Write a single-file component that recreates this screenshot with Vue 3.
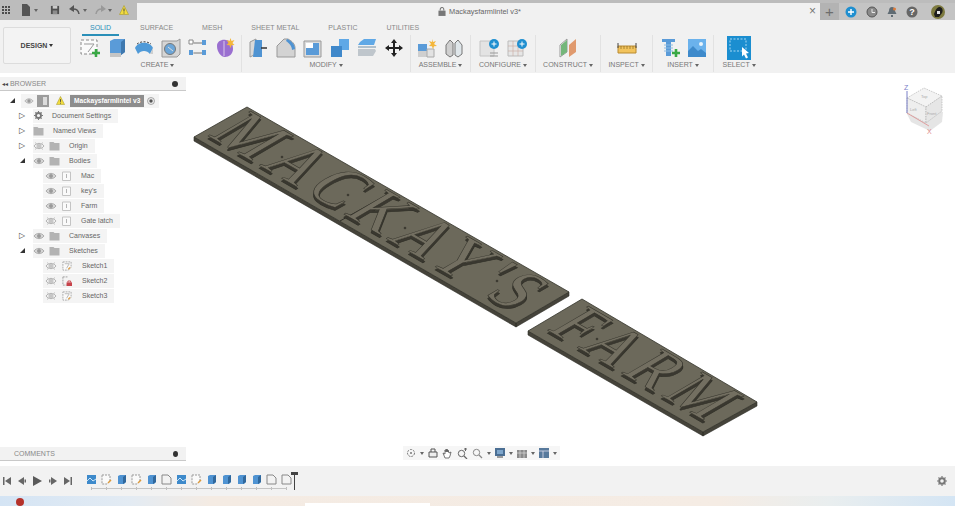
<template>
  <div class="app">
    <svg class="sprite" xmlns="http://www.w3.org/2000/svg">
      <symbol id="eye" viewBox="0 0 12 10"><path d="M1 5c2.500-3.500 7.500-3.500 10 0-2.500 3.500-7.500 3.500-10 0z" fill="#d6d6d6" stroke="#adadad" /><circle cx="6" cy="5" r="2" fill="#9a9a9a" /></symbol>
      <symbol id="eye-off" viewBox="0 0 12 10"><path d="M1 5c2.500-3.500 7.500-3.500 10 0-2.500 3.500-7.500 3.500-10 0z" fill="#f4f4f4" stroke="#b4b4b4" /><circle cx="6" cy="5" r="2" fill="none" stroke="#b4b4b4" /><path d="M2 1.500l8 7M2 8.500l8-7" stroke="#c4c4c4" /></symbol>
      <symbol id="folder" viewBox="0 0 11 10"><path d="M.5 1h4l1 1h5v7.500H.5z" fill="#b3b3b3" /></symbol>
      <symbol id="body" viewBox="0 0 9 10"><path d="M.5 1h8v8.500h-8z" fill="#fafafa" stroke="#c4c4c4" /><path d="M4.500 3v4" stroke="#b4b4b4" /></symbol>
      <symbol id="sketch" viewBox="0 0 11 11"><path d="M1 1h9v6L7 10H1z" fill="#fafafa" stroke="#a4a4a4" stroke-dasharray="2 1" /><path d="M3 3h5L5 8" fill="none" stroke="#b4b4b4" /><path d="M7 9l2-2" stroke="#dd9a3c" stroke-width="1.400" /></symbol>
      <symbol id="sketch-lock" viewBox="0 0 11 11"><path d="M1 1h6M1 1v9h4" fill="none" stroke="#9b9b9b" stroke-dasharray="2 1" /><path d="M5 7h6v4H5z" fill="#c7424a" /><path d="M6.500 7V5.500h3V7" fill="none" stroke="#c7424a" /></symbol>
      <symbol id="cube" viewBox="0 0 20 20"><path d="M3 3l4-2h11v13l-4 3H3z" fill="#5a9bd8" /><path d="M14 17V4l4-3v13z" fill="#3f78ae" /><path d="M3 15h11v4H3z" fill="#c5c5c5" /></symbol>
    </svg>

    <header class="titlebar">
      <div class="quick">
        <svg class="ico grid-ico" width="10" height="10" viewBox="0 0 10 10"><path d="M1 1h2v2H1zM4 1h2v2H4zM7 1h2v2H7zM1 4h2v2H1zM4 4h2v2H4zM7 4h2v2H7zM1 7h2v2H1zM4 7h2v2H4zM7 7h2v2H7z" fill="#4c4c4c" /></svg>
        <svg class="file-ico" width="10" height="12" viewBox="0 0 10 12"><path d="M1 0h5l3 3v9H1z" fill="#555" /></svg>
        <span class="caret q1"></span>
        <svg class="save-ico" width="10" height="10" viewBox="0 0 11 11"><path d="M1 1h9v9H1z" fill="#505050" /><path d="M3 1h5v3H3z" fill="#ccc" /><path d="M3 6h5v4H3z" fill="#8d8d8d" /></svg>
        <svg class="undo-ico" width="11" height="10" viewBox="0 0 11 10"><path d="M10 9C9.500 5 7 3.500 3 4" fill="none" stroke="#555" stroke-width="1.500" /><path d="M5 0L0 4l5 3z" fill="#555" /></svg>
        <span class="caret q2"></span>
        <svg class="redo-ico" width="11" height="10" viewBox="0 0 11 10"><path d="M1 9c.500-4 3-5.500 7-5" fill="none" stroke="#999" stroke-width="1.500" /><path d="M6 0l5 4-5 3z" fill="#999" /></svg>
        <span class="caret q3"></span>
        <svg class="warn-ico" width="10" height="10" viewBox="0 0 10 10"><path d="M5 .5l4.500 9H.5z" fill="#f2dc3d" stroke="#a89a30" stroke-width=".6" /><path d="M5 3.500v3M5 7.500v1" stroke="#444" /></svg>
      </div>
      <div class="doc-tab">
        <svg width="8" height="9" viewBox="0 0 9 10"><path d="M2.500 4V2.500a2 2 0 0 1 4 0V4" fill="none" stroke="#777" stroke-width="1.200" /><path d="M.5 4h8v6h-8z" fill="#777" /></svg>
        <span class="doc-name">Mackaysfarmlintel v3*</span>
        <span class="doc-close">×</span>
      </div>
      <div class="account">
        <span class="new-tab">+</span>
        <svg width="12" height="12" viewBox="0 0 12 12"><circle cx="6" cy="6" r="5.500" fill="#1f8fd0" /><path d="M3 6h6M6 3v6" stroke="#fff" stroke-width="1.400" /></svg>
        <svg width="12" height="12" viewBox="0 0 12 12"><circle cx="6" cy="6" r="5" fill="#8a8a8a" stroke="#555" /><path d="M6 3v3.500h3" fill="none" stroke="#e8e8e8" /></svg>
        <svg width="10" height="12" viewBox="0 0 10 12"><path d="M5 1c2 0 3 1.500 3 4l1.500 3h-9L2 5c0-2.500 1-4 3-4zM4 9h2v2H4z" fill="#5f6b73" /><circle cx="7.500" cy="3" r="1.500" fill="#e07b39" /></svg>
        <svg width="12" height="12" viewBox="0 0 12 12"><circle cx="6" cy="6" r="5.500" fill="#666" /><text x="6" y="9" class="help-mark">?</text></svg>
        <svg class="avatar" width="14" height="14" viewBox="0 0 14 14"><circle cx="7" cy="7" r="7" fill="#7d7a3f" /><path d="M3 9c2-5 3-7 6-7 3 1 3 4 2 6l-3 4H4z" fill="#1e1e1e" /><path d="M6 6h3v3H6z" fill="#e6e6e6" /></svg>
      </div>
    </header>

    <section class="toolbar">
      <div class="design-btn">DESIGN <span class="caret dark"></span></div>
      <div class="tools">
        <nav class="tabs">
          <span class="tab active">SOLID</span>
          <span class="tab">SURFACE</span>
          <span class="tab">MESH</span>
          <span class="tab">SHEET METAL</span>
          <span class="tab">PLASTIC</span>
          <span class="tab">UTILITIES</span>
        </nav>
        <div class="groups">
          <div class="group g-create">
            <div class="icons">
              <svg width="20" height="20" viewBox="0 0 20 20"><path d="M1 2h16v14H1z" fill="#fafafa" stroke="#8a8a8a" stroke-dasharray="3 2" /><path d="M4 6h10L8 14" fill="none" stroke="#999" /><path d="M12 15h8M16 11v8" stroke="#39a845" stroke-width="2.500" /></svg>
              <svg width="20" height="20" viewBox="0 0 20 20"><use href="#cube" /></svg>
              <svg width="20" height="20" viewBox="0 0 20 20"><path d="M1 10c3-7 15-7 18 0l-3 6c-3-4-9-4-12 0z" fill="#4f9ad8" /><path d="M3 6c4-3 10-3 14 0" fill="none" stroke="#444" stroke-dasharray="2 1.500" /><path d="M16 16l3-6v6z" fill="#cfcfcf" /></svg>
              <svg width="20" height="20" viewBox="0 0 20 20"><path d="M1 3h15l3-2v15l-3 3H1z" fill="#d5d5d5" stroke="#999" /><circle cx="9" cy="11" r="5.500" fill="#6ca6d8" stroke="#777" /><path d="M7 9l5 4" stroke="#ddd" /></svg>
              <svg width="20" height="20" viewBox="0 0 20 20"><path d="M2 4h4M14 4h4M2 15h4M14 15h4" stroke="#aaa" /><path d="M6 5h8M6 15h8" stroke="#777" /><path d="M1 12h4v5H1zM14 2h4v5h-4zM14 12h4v5h-4z" fill="#5a9bd8" /><path d="M1 2h4v4H1z" fill="#fff" stroke="#888" /></svg>
              <svg width="20" height="20" viewBox="0 0 20 20"><path d="M2 8c0-5 5-7 9-6 6 1 7 5 7 9 0 5-4 8-8 8S2 14 2 8z" fill="#9a6fd0" /><path d="M9 3v15" stroke="#d9c8ec" /><path d="M15.500 0l1 3 3-1-2 3 2 2-3 .200-1 3-1-3-3-.200 2-2-2-3 3 1z" fill="#f4b63a" /></svg>
            </div>
            <span class="group-label">CREATE <span class="caret"></span></span>
          </div>
          <div class="group g-modify">
            <div class="icons">
              <svg width="20" height="20" viewBox="0 0 20 20"><path d="M1 4l6-3v15l-6 3z" fill="#d9d9d9" stroke="#999" /><path d="M6 2h7v17H4z" fill="#4f93d2" /><path d="M12 10h6" stroke="#333" stroke-width="1.500" /></svg>
              <svg width="20" height="20" viewBox="0 0 20 20"><path d="M1 19V8l7-7h4c4 2 7 5 7 9v9z" fill="#d3d3d3" stroke="#999" /><path d="M11 1c5 2 8 6 8 10l-3 1c0-4-3-7-6-9z" fill="#4f93d2" /></svg>
              <svg width="20" height="20" viewBox="0 0 20 20"><path d="M1 3h17v16H1z" fill="#dcdcdc" stroke="#999" /><path d="M3 10h7V5h6v12H3z" fill="#5a9bd8" /><path d="M3 5h7v5H3z" fill="#fff" /></svg>
              <svg width="20" height="20" viewBox="0 0 20 20"><path d="M9 1h10v11H9z" fill="#5fa8e6" /><path d="M1 8h11v11H1z" fill="#3f88ca" /></svg>
              <svg width="20" height="20" viewBox="0 0 20 20"><path d="M3 4l4-3h12l-2 6H1z" fill="#5fa8e6" /><path d="M1 9h18" stroke="#6f8fa8" /><path d="M1 11h17l1 2-3 5H1z" fill="#bfc6cc" /></svg>
              <svg width="20" height="20" viewBox="0 0 20 20"><path d="M10 1l3 4h-2v4h4V7l4 3-4 3v-2h-4v4h2l-3 4-3-4h2v-4H5v2l-4-3 4-3v2h4V5H7z" fill="#222" /></svg>
            </div>
            <span class="group-label">MODIFY <span class="caret"></span></span>
          </div>
          <div class="group g-assemble">
            <div class="icons">
              <svg width="20" height="20" viewBox="0 0 20 20"><path d="M1 6h9v7H1z" fill="#5a9bd8" /><path d="M1 13h9v6H1z" fill="#cfcfcf" /><path d="M10 11h7v8h-7z" fill="#e2e2e2" stroke="#aaa" /><path d="M15 1l1 3 3-1-2 3 3 2-3 .300-1 3-1-3-3-.300 2-2-2-3 3 1z" fill="#f4b63a" /></svg>
              <svg width="20" height="20" viewBox="0 0 20 20"><path d="M2 7l4-5 3 3v12l-3 2-4-3z" fill="#cfcfcf" stroke="#777" /><path d="M18 7l-4-5-3 3v12l3 2 4-3z" fill="#dfe6ea" stroke="#777" /></svg>
            </div>
            <span class="group-label">ASSEMBLE <span class="caret"></span></span>
          </div>
          <div class="group g-configure">
            <div class="icons">
              <svg width="21" height="20" viewBox="0 0 21 20"><path d="M1 3h14v15H1z" fill="#e3e3e3" stroke="#c4c4c4" /><path d="M11 15h8M11 18h8" stroke="#999" /><circle cx="15" cy="6" r="5" fill="#1f8fd0" /><path d="M12.500 6h5M15 3.500v5" stroke="#fff" /></svg>
              <svg width="21" height="20" viewBox="0 0 21 20"><path d="M1 3h15v15H1z" fill="#e6e6e6" stroke="#bbb" /><path d="M1 8h15M1 13h15M6 3v15M11 3v15" stroke="#c9a9a0" stroke-width=".6" /><circle cx="15" cy="6" r="5" fill="#1f8fd0" /><path d="M12.500 6h5M15 3.500v5" stroke="#fff" /></svg>
            </div>
            <span class="group-label">CONFIGURE <span class="caret"></span></span>
          </div>
          <div class="group g-construct">
            <div class="icons">
              <svg width="20" height="20" viewBox="0 0 20 20"><path d="M2 7l7-6v13l-7 5z" fill="#fff" stroke="#999" /><path d="M3 7l6-5v12l-6 4z" fill="#74b67a" /><path d="M11 7l7-6v13l-7 5z" fill="#e09a6e" /></svg>
            </div>
            <span class="group-label">CONSTRUCT <span class="caret"></span></span>
          </div>
          <div class="group g-inspect">
            <div class="icons">
              <svg width="20" height="20" viewBox="0 0 20 20"><path d="M1 8h18v7H1z" fill="#f2c35c" stroke="#b98a30" /><path d="M1 5v5M19 5v5" stroke="#444" /><path d="M4 8v3M7 8v3M10 8v3M13 8v3M16 8v3" stroke="#8a6a20" stroke-width=".7" /></svg>
            </div>
            <span class="group-label">INSPECT <span class="caret"></span></span>
          </div>
          <div class="group g-insert">
            <div class="icons">
              <svg width="20" height="20" viewBox="0 0 20 20"><path d="M1 1h13v3H1z" fill="#5a9bd8" /><path d="M5 4h5v14H5z" fill="#5a9bd8" /><path d="M3 7h9M3 10h9M3 13h9" stroke="#8cbce4" /><path d="M11 15h8M15 11v8" stroke="#39a845" stroke-width="2.600" /></svg>
              <svg width="18" height="18" viewBox="0 0 18 18"><path d="M0 0h18v18H0z" fill="#6bb2ec" /><path d="M0 18V12l5-5 5 5 3-2 5 4v4z" fill="#3e8acb" /><circle cx="13" cy="5" r="2" fill="#e8f4fc" /></svg>
            </div>
            <span class="group-label">INSERT <span class="caret"></span></span>
          </div>
          <div class="group g-select">
            <div class="icons">
              <svg width="24" height="24" viewBox="0 0 24 24"><path d="M0 0h24v24H0z" fill="#1b8ed0" /><path d="M3 3h16v12H3z" fill="none" stroke="#a8d8f2" stroke-dasharray="2 1.500" /><path d="M15 11l7 6-3 .500 2 4-2 1-2-4-2 2z" fill="#fff" /></svg>
            </div>
            <span class="group-label">SELECT <span class="caret"></span></span>
          </div>
        </div>
      </div>
    </section>

    <main class="viewport">
      <svg class="model" width="955" height="393" viewBox="0 73 955 393">
        <g>
          <path d="M194 137v4l322 186v-4zM516 323v4l53-31v-4z" fill="#45433a" stroke="#2c2b25" stroke-width=".6" />
          <path d="M194 137l53-30 322 185-53 31z" fill="#6c695b" stroke="#34332b" stroke-width=".8" />
          <path d="M390 193l-50 28" stroke="#2f2e27" stroke-width="1" />
          <text class="relief under" transform="matrix(.867 .5 -1.08 .632 0 0)" x="257" y="15" font-size="60" textLength="352">MACKAY'S</text>
          <text class="relief top" transform="matrix(.867 .5 -1.08 .632 0 -3)" x="257" y="15" font-size="60" textLength="352">MACKAY'S</text>
          <path d="M528 331v4l175 101v-4zM703 432v4l54-30v-4z" fill="#45433a" stroke="#2c2b25" stroke-width=".6" />
          <path d="M528 331l54-32 175 103-54 30z" fill="#6c695b" stroke="#34332b" stroke-width=".8" />
          <text class="relief under" transform="matrix(.867 .5 -1.08 .632 0 0)" x="647" y="14" font-size="58" textLength="183">FARM</text>
          <text class="relief top" transform="matrix(.867 .5 -1.08 .632 0 -3)" x="647" y="14" font-size="58" textLength="183">FARM</text>
          <g fill="#3d3b32">
            <circle cx="282" cy="157" r="1.300" />
            <circle cx="348" cy="195" r="1.300" />
            <circle cx="405" cy="228" r="1.300" />
            <circle cx="497" cy="281" r="1.300" />
            <circle cx="597" cy="339" r="1.300" />
          </g>
        </g>
        <g class="viewcube">
          <path d="M906 112l5 10 19 9 12-9 1-10-20-5z" fill="#d4d4d4" opacity=".6" />
          <path d="M907 98l17-10 18 8-16 11z" fill="#f3f3f3" stroke="#aaa" stroke-width=".6" stroke-dasharray="1.500 1" />
          <path d="M907 98l19 9v16l-19-10z" fill="#eeeeee" stroke="#aaa" stroke-width=".6" stroke-dasharray="1.500 1" />
          <path d="M926 107l16-11v15l-16 12z" fill="#e6e6e6" stroke="#aaa" stroke-width=".6" stroke-dasharray="1.500 1" />
          <path d="M907 113V91" stroke="#7a80c8" />
          <path d="M907 113l22 13" stroke="#e0a0a0" />
          <text x="904" y="90" class="axis z">Z</text>
          <text x="927" y="134" class="axis x">X</text>
          <text x="921" y="98" class="cube-txt">Top</text>
          <text x="910" y="111" class="cube-txt">Left</text>
          <text x="927" y="115" class="cube-txt">Front</text>
        </g>
      </svg>

      <aside class="browser">
        <div class="panel-head">
          <span class="head-left"><span class="dbl">◂◂</span> BROWSER</span>
          <span class="dot"></span>
        </div>
        <div class="tree">
          <div class="row root">
            <span class="arrow open"></span>
            <div class="pill root-pill">
              <svg width="10" height="10" class="root-eye"><use href="#eye" /></svg>
              <svg width="12" height="12" viewBox="0 0 12 12"><path d="M0 0h12v12H0z" fill="#9c9c9c" /><path d="M6 2h4v8H6z" fill="#dcdcdc" /></svg>
              <svg class="root-warn" width="9" height="9" viewBox="0 0 10 10"><path d="M5 .5l4.500 9H.5z" fill="#f2dc3d" stroke="#a89a30" stroke-width=".6" /><path d="M5 3.500v3M5 7.500v1" stroke="#444" /></svg>
              <span class="root-name">Mackaysfarmlintel v3</span>
              <svg width="8" height="8" viewBox="0 0 8 8"><circle cx="4" cy="4" r="3.500" fill="#eee" stroke="#888" stroke-width=".7" /><circle cx="4" cy="4" r="1.700" fill="#555" /></svg>
            </div>
          </div>
          <div v-for="item in treeItems" :key="item.name" class="row" :class="'lv' + item.level">
            <span v-if="item.level === 1" class="arrow" :class="item.open ? 'open' : 'closed'"></span>
            <div class="pill">
              <svg v-if="item.eye" class="eye" width="12" height="10"><use :href="item.eye === 'on' ? '#eye' : '#eye-off'" /></svg>
              <svg v-if="item.icon === 'gear'" class="gear" width="9" height="9" viewBox="0 0 10 10"><circle cx="5" cy="5" r="2.800" fill="none" stroke="#777" stroke-width="2" /><path d="M5 0v10M0 5h10M1.500 1.500l7 7M8.500 1.500l-7 7" stroke="#777" stroke-width="1.200" stroke-dasharray="1.500 7 1.500" /></svg>
              <svg v-else class="kind" :class="{ bare: !item.eye }" :width="iconSize[item.icon]" height="10"><use :href="'#' + item.icon" /></svg>
              <span class="name">{{ item.name }}</span>
            </div>
          </div>
        </div>
      </aside>

      <div class="comments">
        <span>COMMENTS</span>
        <span class="dot info"></span>
      </div>

      <div class="navbar">
        <svg width="10" height="10" viewBox="0 0 10 10"><circle cx="5" cy="5" r="3.500" fill="none" stroke="#777" stroke-dasharray="2 1" /><circle cx="5" cy="5" r="1" fill="#777" /></svg>
        <span class="caret"></span>
        <svg width="10" height="10" viewBox="0 0 10 10"><path d="M1 4h8v5H1z" fill="#eee" stroke="#555" /><path d="M3 4V1h4v3" fill="none" stroke="#555" /></svg>
        <svg width="11" height="11" viewBox="0 0 11 11"><path d="M3 10L1 5l2 1V2l1 2V1l1 3V1l1 3V2l1 3 2-1-1 4-1 2z" fill="#fff" stroke="#555" stroke-width=".8" /></svg>
        <svg width="11" height="11" viewBox="0 0 11 11"><circle cx="4.500" cy="5.500" r="3.200" fill="none" stroke="#666" /><path d="M7 8l3 3" stroke="#666" stroke-width="1.200" /><path d="M7 1h3M8.500 0v3" stroke="#666" /></svg>
        <svg width="11" height="11" viewBox="0 0 11 11"><circle cx="4.500" cy="4.500" r="3.200" fill="none" stroke="#888" /><path d="M7 7l3 3" stroke="#888" stroke-width="1.200" /></svg>
        <span class="caret"></span>
        <svg width="10" height="10" viewBox="0 0 10 10"><path d="M0 0h10v8H0z" fill="#4b6f94" /><path d="M2 2h6v4H2z" fill="#7ea6cc" /><path d="M2 9h6" stroke="#444" /></svg>
        <span class="caret"></span>
        <svg width="10" height="10" viewBox="0 0 10 10"><path d="M0 2h10v8H0z" fill="#8b8b8b" /><path d="M3 2v8M7 2v8M0 5h10" stroke="#ddd" stroke-width=".7" /></svg>
        <span class="caret"></span>
        <svg width="10" height="10" viewBox="0 0 10 10"><path d="M0 0h10v10H0z" fill="#57799c" /><path d="M0 3h10M4 3v7" stroke="#dde" stroke-width=".8" /></svg>
        <span class="caret"></span>
      </div>
    </main>

    <footer class="timeline">
      <div class="controls">
        <svg width="8" height="8" viewBox="0 0 8 8"><path d="M0 0h1.500v8H0zM8 0v8L2 4z" fill="#666" /></svg>
        <svg width="8" height="8" viewBox="0 0 8 8"><path d="M6 0v8L0 4zM6.500 2.500H8v3H6.500z" fill="#666" /></svg>
        <svg width="9" height="10" viewBox="0 0 9 10"><path d="M0 0l9 5-9 5z" fill="#5a5a5a" /></svg>
        <svg width="8" height="8" viewBox="0 0 8 8"><path d="M2 0v8l6-4zM0 2.500h1.500v3H0z" fill="#666" /></svg>
        <svg width="8" height="8" viewBox="0 0 8 8"><path d="M0 0v8l6-4zM6.500 0H8v8H6.500z" fill="#666" /></svg>
      </div>
      <div class="steps">
        <div v-for="(s, i) in steps" :key="i" class="step">
          <svg width="11" height="11" viewBox="0 0 11 11">
            <template v-if="s === 'c'"><path d="M1 1h9v9H1z" fill="#3e8acb" /><path d="M1 7l3-3 3 3 3-2" fill="none" stroke="#cde6f8" /></template>
            <template v-else-if="s === 's'"><path d="M1 1h8v6l-3 3H1z" fill="#fafafa" stroke="#999" stroke-dasharray="2 1" /><path d="M7 9l3-3" stroke="#dd9a3c" stroke-width="1.400" /></template>
            <template v-else-if="s === 'e'"><path d="M2 2l2-1h6v7l-2 2H2z" fill="#4f93d2" /><path d="M7 10V3l3-2v7z" fill="#31689c" /></template>
            <template v-else><path d="M1 1h6l3 3v6H1z" fill="#f2f2f2" stroke="#888" /></template>
          </svg>
        </div>
        <span class="marker"></span>
      </div>
      <svg class="settings" width="10" height="10" viewBox="0 0 10 10"><circle cx="5" cy="5" r="2.800" fill="none" stroke="#777" stroke-width="2" /><path d="M5 0v10M0 5h10M1.500 1.500l7 7M8.500 1.500l-7 7" stroke="#777" stroke-width="1.200" stroke-dasharray="1.500 7 1.500" /></svg>
    </footer>
    <div class="under-strip"><span class="red-dot"></span></div>
  </div>
</template>

<script setup>
const iconSize = { folder: 11, body: 9, sketch: 10, 'sketch-lock': 10 }

const treeItems = [
  { level: 1, icon: 'gear', name: 'Document Settings' },
  { level: 1, icon: 'folder', name: 'Named Views' },
  { level: 1, eye: 'off', icon: 'folder', name: 'Origin' },
  { level: 1, open: true, eye: 'on', icon: 'folder', name: 'Bodies' },
  { level: 2, eye: 'on', icon: 'body', name: 'Mac' },
  { level: 2, eye: 'on', icon: 'body', name: "key's" },
  { level: 2, eye: 'on', icon: 'body', name: 'Farm' },
  { level: 2, eye: 'off', icon: 'body', name: 'Gate latch' },
  { level: 1, eye: 'on', icon: 'folder', name: 'Canvases' },
  { level: 1, open: true, eye: 'on', icon: 'folder', name: 'Sketches' },
  { level: 2, eye: 'off', icon: 'sketch', name: 'Sketch1' },
  { level: 2, eye: 'off', icon: 'sketch-lock', name: 'Sketch2' },
  { level: 2, eye: 'off', icon: 'sketch', name: 'Sketch3' },
]

const steps = ['c', 's', 'e', 's', 'e', 'f', 'c', 's', 'e', 'e', 'e', 'e', 'f', 'f']
</script>

<style scoped>
.app {
  width: 957px;
  height: 506px;
  display: flex;
  flex-direction: column;
  overflow: hidden;
  background: #fff;
  font-family: "Liberation Sans", Arial, sans-serif;
  color: #555;
}
.sprite {
  display: none;
}

.caret {
  display: inline-block;
  width: 0;
  height: 0;
  border-left: 2px solid transparent;
  border-right: 2px solid transparent;
  border-top: 3px solid #666;
  vertical-align: middle;
}
.caret.dark {
  border-top-color: #333;
}

/* top bar */
.titlebar {
  width: 955px;
  height: 20px;
  flex: none;
  display: flex;
  background: #bcbcbc;
}
.quick {
  width: 137px;
  display: flex;
  align-items: center;
  padding-left: 1px;
  box-sizing: border-box;
}
.file-ico { margin-left: 10px; }
.q1 { margin-left: 3px; }
.save-ico { margin-left: 12px; }
.undo-ico { margin-left: 9px; }
.q2 { margin-left: 3px; }
.redo-ico { margin-left: 8px; }
.q3 { margin-left: 2px; }
.warn-ico { margin-left: 7px; }

.doc-tab {
  flex: 1;
  margin-top: 3px;
  display: flex;
  align-items: center;
  justify-content: center;
  gap: 3px;
  padding: 0 0 0 2px;
  background: #f1f1f1;
  position: relative;
  font-size: 7.4px;
  color: #666;
}
.doc-close {
  position: absolute;
  right: 4px;
  top: 0;
  font-size: 12px;
  line-height: 16px;
  color: #777;
}
.account {
  width: 135px;
  margin-top: 3px;
  display: flex;
  align-items: center;
  background: #c4c4c4;
  gap: 9px;
}
.new-tab {
  width: 19px;
  height: 17px;
  margin-right: -3px;
  flex: none;
  text-align: center;
  background: #b3b3b3;
  color: #6d6d6d;
  font-size: 15px;
  line-height: 17px;
}
.help-mark {
  fill: #fff;
  font-size: 9px;
  font-weight: 700;
  text-anchor: middle;
}
.avatar {
  margin-left: 4px;
}

/* ribbon */
.toolbar {
  width: 955px;
  height: 53px;
  flex: none;
  display: flex;
  background: #f1f1f1;
}
.design-btn {
  width: 68px;
  height: 37px;
  margin: 7px 0 0 3px;
  box-sizing: border-box;
  border: 1px solid #dcdcdc;
  border-radius: 2px;
  background: #f3f3f3;
  display: flex;
  align-items: center;
  justify-content: center;
  gap: 2px;
  font-size: 7px;
  font-weight: 700;
  color: #444;
}
.tools {
  display: flex;
  flex-direction: column;
}
.tabs {
  display: flex;
  gap: 29px;
  padding-left: 19px;
  height: 15px;
}
.tab {
  font-size: 7px;
  line-height: 15px;
  color: #888;
}
.tab.active {
  position: relative;
  color: #2a8fb8;
}
.tab.active::after {
  content: "";
  position: absolute;
  left: -8px;
  right: -8px;
  bottom: -1px;
  height: 2px;
  background: #2a8fb8;
}
.groups {
  display: flex;
  padding-left: 3px;
}
.group {
  display: flex;
  flex-direction: column;
  align-items: center;
  box-sizing: border-box;
  height: 37px;
  padding-top: 2px;
  border-right: 1px solid #e2e2e2;
}
.icons {
  display: flex;
  align-items: center;
  gap: 7px;
  height: 22px;
}
.group-label {
  margin-top: 1px;
  font-size: 7px;
  line-height: 9px;
  color: #777;
  white-space: nowrap;
}
.g-create { width: 168px; }
.g-modify { width: 169px; }
.g-assemble { width: 60px; }
.g-configure { width: 65px; }
.g-construct { width: 65px; }
.g-inspect { width: 52px; }
.g-insert { width: 61px; }
.g-select { width: 50px; border-right: none; }

/* canvas */
.viewport {
  height: 393px;
  flex: none;
  position: relative;
}
.model {
  position: absolute;
  left: 0;
  top: 0;
}
.relief {
  font-family: "Liberation Serif", "Times New Roman", serif;
}
.under {
  fill: #3a3830;
  stroke: #33322a;
  stroke-width: 0.8;
}
.top {
  fill: #736f61;
  stroke: #34332b;
  stroke-width: 0.5;
}
.axis {
  font-size: 7px;
}
.axis.z { fill: #7a80c8; }
.axis.x { fill: #d88; }
.cube-txt {
  font-size: 4px;
  fill: #aaa;
}

.browser {
  position: absolute;
  left: 0;
  top: 4px;
  width: 186px;
}
.panel-head {
  height: 13px;
  display: flex;
  align-items: center;
  justify-content: space-between;
  padding: 0 8px 0 2px;
  background: #f2f2f2;
  border-bottom: 1px solid #c9c9c9;
  font-size: 7px;
  color: #888;
}
.dbl {
  font-size: 6px;
  color: #444;
}
.dot {
  width: 6px;
  height: 6px;
  border-radius: 50%;
  background: #333;
}
.tree {
  padding-top: 2px;
}
.row {
  height: 15px;
  display: flex;
  align-items: center;
  box-sizing: border-box;
  font-size: 7px;
}
.root { padding-left: 8px; }
.lv1 { padding-left: 18px; }
.lv2 { padding-left: 43px; }
.arrow {
  width: 8px;
  height: 8px;
  flex: none;
  display: flex;
  align-items: center;
  justify-content: center;
}
.arrow.closed::before {
  content: "▷";
  font-family: "DejaVu Sans", sans-serif;
  font-size: 8px;
  line-height: 8px;
  color: #444;
}
.arrow.open::before {
  content: "";
  width: 0;
  height: 0;
  border-bottom: 5px solid #333;
  border-left: 5px solid transparent;
}
.pill {
  height: 14px;
  display: flex;
  align-items: center;
  background: #f4f4f4;
  padding-right: 7px;
}
.root .pill {
  margin-left: 5px;
  gap: 3px;
  padding: 0 4px 0 3px;
}
.lv1 .pill {
  margin-left: 7px;
}
.root-warn { margin: 0 2px 0 4px; }
.root-name {
  height: 12px;
  line-height: 12px;
  padding: 0 4px;
  background: #8d8d8d;
  color: #fff;
  font-weight: 700;
  font-size: 6.6px;
  white-space: nowrap;
}
.name {
  margin-left: 9px;
  color: #666;
  white-space: nowrap;
}
.lv1 .kind { margin-left: 4px; }
.lv1 .kind.bare { margin-left: 0; }
.lv1 .gear { margin-left: 1px; }
.lv2 .pill { padding-left: 2px; }
.lv2 .kind { margin-left: 5px; }
.lv2 .name { margin-left: 10px; }

.comments {
  position: absolute;
  left: 0;
  bottom: 5px;
  width: 186px;
  height: 14px;
  box-sizing: border-box;
  display: flex;
  align-items: center;
  justify-content: space-between;
  padding: 0 8px 0 14px;
  background: #f2f2f2;
  border-bottom: 1px solid #c9c9c9;
  font-size: 7px;
  color: #888;
}
.dot.info {
  width: 5px;
  height: 6px;
}
.navbar {
  position: absolute;
  left: 403px;
  bottom: 6px;
  height: 14px;
  display: flex;
  align-items: center;
  gap: 4px;
  padding: 0 3px;
  background: #f6f6f6;
}

/* timeline */
.timeline {
  width: 955px;
  height: 30px;
  flex: none;
  display: flex;
  align-items: center;
  background: #f2f2f2;
}
.controls {
  display: flex;
  align-items: center;
  gap: 7px;
  padding-left: 3px;
  width: 84px;
  box-sizing: border-box;
}
.steps {
  position: relative;
  display: flex;
  padding-bottom: 6px;
  margin-top: 2px;
}
.steps::after {
  content: "";
  position: absolute;
  left: 8px;
  right: 7px;
  bottom: 2px;
  height: 1px;
  background: #c4c4c4;
}
.step {
  position: relative;
  width: 15px;
  display: flex;
  justify-content: center;
}
.step::after {
  content: "";
  position: absolute;
  left: 7px;
  bottom: -5px;
  width: 1px;
  height: 3px;
  background: #bdbdbd;
}
.marker {
  position: absolute;
  right: -1px;
  top: -2px;
  width: 1px;
  height: 18px;
  background: #444;
}
.marker::before {
  content: "";
  position: absolute;
  left: -3px;
  top: 0;
  width: 7px;
  height: 3px;
  background: #444;
}
.settings {
  margin-left: auto;
  margin-right: 8px;
}
.under-strip {
  height: 10px;
  flex: none;
  width: 955px;
  position: relative;
  background:
    linear-gradient(#fff, #fff) 305px 100% / 125px 3px no-repeat,
    linear-gradient(90deg, #d4e4f4 0, #e3ebf3 130px, #f4ebe3 210px, #f5ece4 720px, #e9eeef 830px, #d4e5f4 955px);
}
.red-dot {
  position: absolute;
  left: 16px;
  top: 2px;
  width: 8px;
  height: 8px;
  border-radius: 50%;
  background: #b5322b;
}
</style>
